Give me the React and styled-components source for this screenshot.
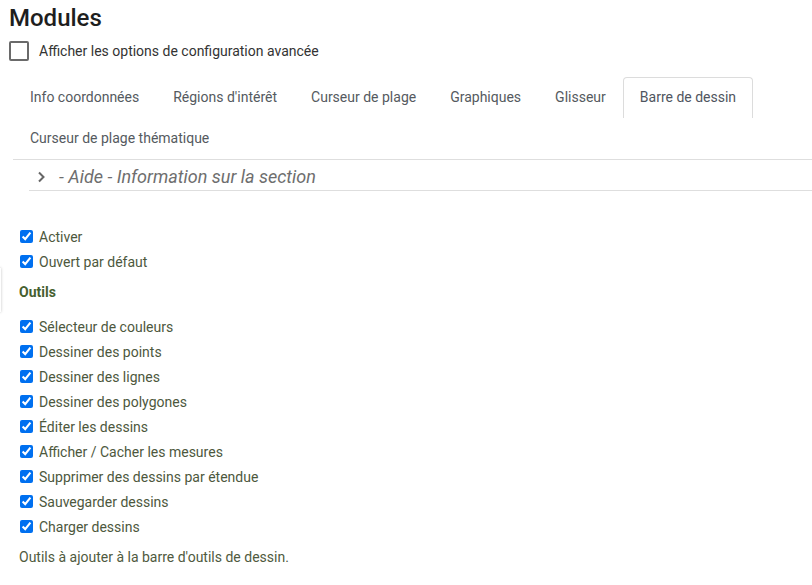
import React, { useState } from 'react'
import styled, { createGlobalStyle } from 'styled-components'

const GlobalStyle = createGlobalStyle`
  html, body {
    margin: 0;
    padding: 0;
    background: #fff;
    font-family: Roboto, "Liberation Sans", sans-serif;
    font-size: 14px;
    color: #333;
  }
  * { box-sizing: border-box; }
`

const Page = styled.div`
  position: relative;
  width: 812px;
  height: 585px;
  overflow: hidden;
`

const Title = styled.h1`
  margin: 3px 0 0 9px;
  height: 30px;
  line-height: 30px;
  font-size: 24px;
  font-weight: 500;
  color: #1e1e1e;
`

const AdvancedRow = styled.label`
  display: flex;
  align-items: center;
  gap: 10px;
  margin: 8px 0 0 9px;
  height: 20px;
  color: #333;
  cursor: pointer;
`

const BigBox = styled.span`
  width: 20px;
  height: 20px;
  border: 2px solid #6a6a6a;
  border-radius: 2px;
`

const TabBar = styled.ul`
  list-style: none;
  display: flex;
  flex-wrap: wrap;
  margin: 16px 0 0 13px;
  padding: 0;
  border-bottom: 1px solid #dedede;
`

const Tab = styled.li`
  height: 41px;
  display: flex;
  align-items: center;
  padding: 0 16px 2px;
  border: 1px solid ${p => (p.active ? '#dcdcdc' : 'transparent')};
  border-bottom: none;
  border-radius: 4px 4px 0 0;
  color: ${p => (p.active ? '#4f5560' : '#555a60')};
  cursor: pointer;
`

const Accordion = styled.div`
  margin-left: 29px;
  height: 31px;
  display: flex;
  align-items: center;
  gap: 13px;
  padding: 3px 0 0 8px;
  border-bottom: 1px solid #dedede;
`

const AccordionText = styled.span`
  font-size: 18px;
  font-style: italic;
  color: #6e6e6e;
`

const Section = styled.div`
  margin-top: 33px;
  padding-left: 20px;
`

const CheckRow = styled.label`
  display: flex;
  align-items: center;
  gap: 6px;
  height: 25px;
  color: #4d583d;
`

const Check = styled.input`
  width: 13px;
  height: 13px;
  margin: 0;
  accent-color: #0070f0;
`

const Heading = styled.div`
  margin: 8px 0 12px -1px;
  height: 20px;
  line-height: 20px;
  font-weight: 700;
  color: #46602f;
`

const Help = styled.div`
  margin: 8px 0 0 -1px;
  height: 20px;
  line-height: 20px;
  color: #4f5a40;
`

const EdgeShadow = styled.div`
  position: absolute;
  left: -2px;
  top: 268px;
  width: 3px;
  height: 44px;
  background: #fff;
  box-shadow: 0 0 3px rgba(0, 0, 0, 0.25);
`

const tabs = [
  'Info coordonnées',
  "Régions d'intérêt",
  'Curseur de plage',
  'Graphiques',
  'Glisseur',
  'Barre de dessin',
  'Curseur de plage thématique'
]

const general = ['Activer', 'Ouvert par défaut']

const tools = [
  'Sélecteur de couleurs',
  'Dessiner des points',
  'Dessiner des lignes',
  'Dessiner des polygones',
  'Éditer les dessins',
  'Afficher / Cacher les mesures',
  'Supprimer des dessins par étendue',
  'Sauvegarder dessins',
  'Charger dessins'
]

function Chevron() {
  return (
    <svg width="9" height="12" viewBox="0 0 9 12">
      <path d="M2 1.5 L6.5 6 L2 10.5" fill="none" stroke="#666" strokeWidth="2" />
    </svg>
  )
}

function CheckItem({ label }) {
  const [on, setOn] = useState(true)
  return (
    <CheckRow>
      <Check type="checkbox" checked={on} onChange={() => setOn(!on)} />
      {label}
    </CheckRow>
  )
}

export default function App() {
  const [active, setActive] = useState('Barre de dessin')

  return (
    <Page>
      <GlobalStyle />
      <Title>Modules</Title>
      <AdvancedRow>
        <BigBox />
        Afficher les options de configuration avancée
      </AdvancedRow>

      <TabBar>
        {tabs.map(t => (
          <Tab key={t} active={t === active} onClick={() => setActive(t)}>
            {t}
          </Tab>
        ))}
      </TabBar>

      <Accordion>
        <Chevron />
        <AccordionText>- Aide - Information sur la section</AccordionText>
      </Accordion>

      <Section>
        {general.map(g => <CheckItem key={g} label={g} />)}
        <Heading>Outils</Heading>
        {tools.map(t => <CheckItem key={t} label={t} />)}
        <Help>Outils à ajouter à la barre d'outils de dessin.</Help>
      </Section>

      <EdgeShadow />
    </Page>
  )
}
